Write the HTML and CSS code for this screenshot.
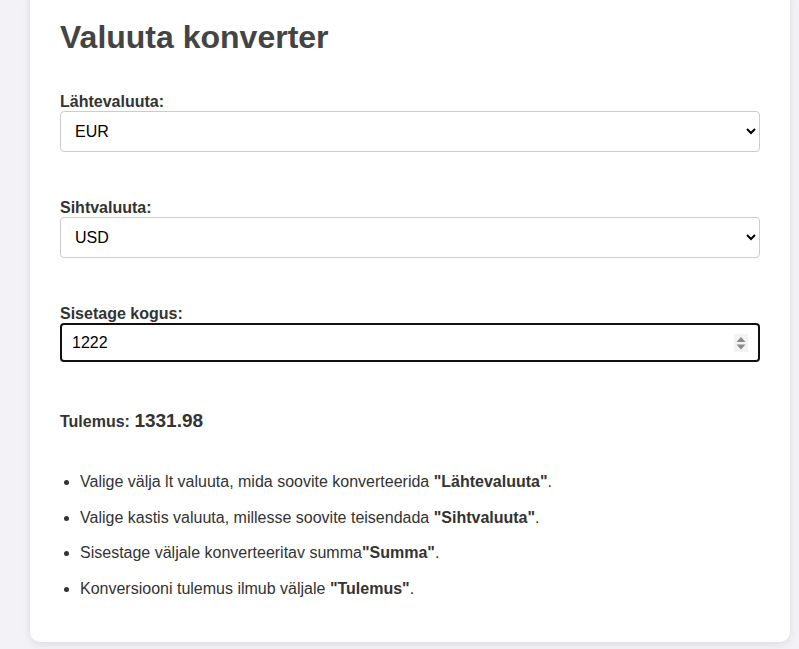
FILE: index.html
```html
<!DOCTYPE html>
<html lang="et">
<head>
    <meta charset="UTF-8">
    <meta name="viewport" content="width=device-width, initial-scale=1.0">
    <title>Valuuta konverter</title>
    <link rel="stylesheet" href="styles.css">
</head>
<body>

<div class="container">
    <h1>Valuuta konverter</h1>

    <div class="field">
        <label for="from">Lähtevaluuta:</label>
        <select id="from" name="from">
            <option>EUR</option>
            <option>USD</option>
            <option>GBP</option>
        </select>
    </div>

    <div class="field">
        <label for="to">Sihtvaluuta:</label>
        <select id="to" name="to">
            <option>USD</option>
            <option>EUR</option>
            <option>GBP</option>
        </select>
    </div>

    <div class="field field-last">
        <label for="amount">Sisetage kogus:</label>
        <div class="amount-box">
            <input type="number" id="amount" name="amount" value="1222">
            <span class="spinner">
                <svg width="14" height="18" viewBox="0 0 14 18">
                    <path d="M2.5 8 L7 3 L11.5 8 Z" fill="#8a8a8a"/>
                    <path d="M2.5 10.5 L7 15.5 L11.5 10.5 Z" fill="#8a8a8a"/>
                </svg>
            </span>
        </div>
    </div>

    <p class="result">Tulemus: <span id="result">1331.98</span></p>

    <ul class="help">
        <li>Valige välja lt valuuta, mida soovite konverteerida <b>"Lähtevaluuta"</b>.</li>
        <li>Valige kastis valuuta, millesse soovite teisendada <b>"Sihtvaluuta"</b>.</li>
        <li>Sisestage väljale konverteeritav summa<b>"Summa"</b>.</li>
        <li>Konversiooni tulemus ilmub väljale <b>"Tulemus"</b>.</li>
    </ul>
</div>

</body>
</html>
```

FILE: styles.css
```css
/* Reset dan dasar */
* {
    margin: 0;
    padding: 0;
    box-sizing: border-box;
}

body {
    font-family: "Liberation Sans", Arial, sans-serif;
    background-color: #f3f3f7;
    color: #333;
    padding: 0 9px 9px 30px;
}

.container {
    max-width: 760px;
    margin-top: -11px;
    background-color: white;
    padding: 30px 30px 31px 30px;
    border-radius: 10px;
    box-shadow: 0 2px 8px rgba(0, 0, 0, 0.1);
}

h1 {
    font-size: 32px;
    line-height: 37px;
    color: #444;
    margin-bottom: 36px;
}

.field {
    margin-bottom: 46px;
}

.field-last {
    margin-bottom: 48px;
}

label {
    display: block;
    font-size: 16px;
    font-weight: bold;
    line-height: 19px;
    color: #333;
}

select {
    display: block;
    width: 100%;
    height: 41px;
    padding: 0 10px;
    font-family: inherit;
    font-size: 16px;
    color: #000;
    background-color: white;
    border: 1px solid #ccc;
    border-radius: 4px;
}

.amount-box {
    position: relative;
}

.amount-box input {
    display: block;
    width: 100%;
    height: 39px;
    padding: 0 10px;
    font-family: inherit;
    font-size: 16px;
    color: #000;
    border: 2px solid #101010;
    border-radius: 4px;
    outline: none;
    -moz-appearance: textfield;
}

.amount-box input::-webkit-inner-spin-button,
.amount-box input::-webkit-outer-spin-button {
    -webkit-appearance: none;
    margin: 0;
}

.spinner {
    position: absolute;
    right: 12px;
    top: 11px;
    width: 14px;
    height: 18px;
    background-color: #f3f3f3;
}

.spinner svg {
    display: block;
}

.result {
    font-size: 16px;
    font-weight: bold;
    line-height: 21px;
    margin-bottom: 37px;
}

.result span {
    font-size: 19px;
}

.help {
    padding-left: 20px;
    font-size: 16px;
    line-height: 1.6;
}

.help li {
    margin-bottom: 10px;
}

.help b {
    color: #333;
}
```
